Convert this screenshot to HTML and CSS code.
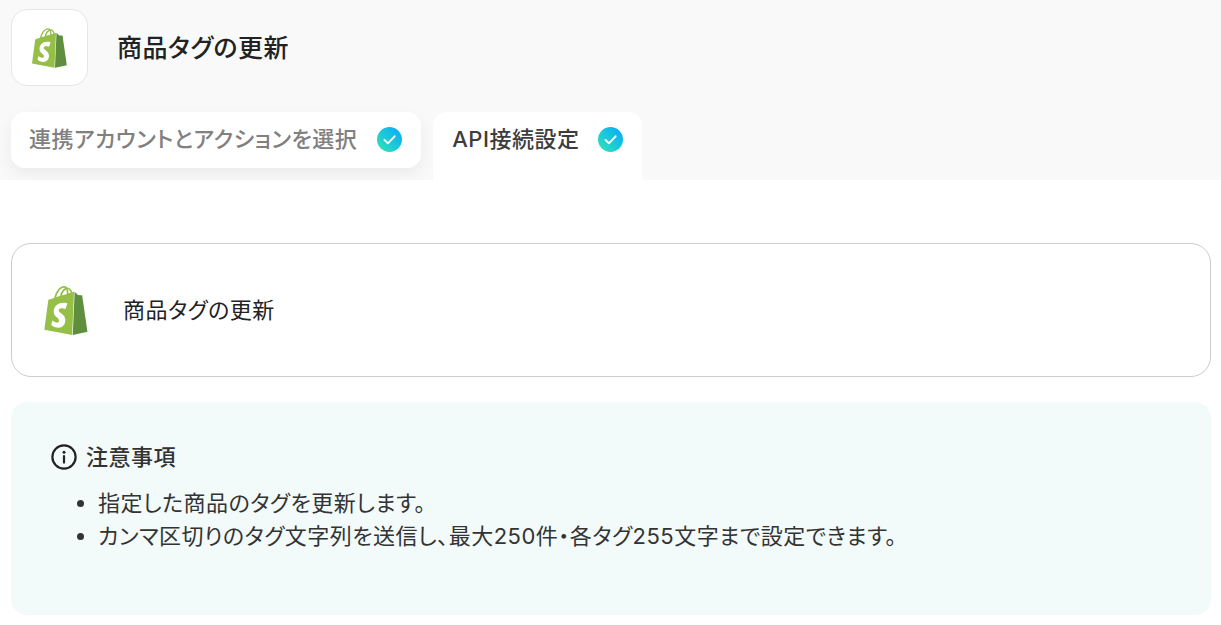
FILE: index.html
```html
<!DOCTYPE html>
<html lang="ja">
<head>
    <meta charset="UTF-8">
    <meta name="viewport" content="width=device-width, initial-scale=1.0">
    <title>商品タグの更新</title>
    <link rel="stylesheet" href="styles.css">
</head>
<body>
    <svg class="defs" width="0" height="0" aria-hidden="true">
        <defs>
            <linearGradient id="check-grad" x1="0" y1="1" x2="1" y2="0">
                <stop offset="0.1" stop-color="#2ee0bb"/>
                <stop offset="0.9" stop-color="#08aef8"/>
            </linearGradient>
            <symbol id="shopify" viewBox="1.4 0 21.2 24">
                <path fill="#95bf47" d="M11.71 11.305s-.81-.424-1.774-.424c-1.447 0-1.504.906-1.504 1.141 0 1.232 3.24 1.715 3.24 4.629 0 2.295-1.44 3.76-3.406 3.76-2.354 0-3.54-1.465-3.54-1.465l.646-2.086s1.245 1.066 2.28 1.066c.675 0 .975-.545.975-.932 0-1.619-2.654-1.694-2.654-4.359-.034-2.237 1.571-4.416 4.827-4.416 1.257 0 1.875.361 1.875.361l-.945 2.715-.02.01zM11.17.83c.136 0 .271.038.405.135-.984.465-2.064 1.639-2.508 3.992-.656.213-1.293.405-1.889.578C7.697 3.75 8.951.84 11.17.84V.83zm1.235 2.949v.135c-.754.232-1.583.484-2.394.736.466-1.777 1.333-2.645 2.085-2.971.193.501.309 1.176.309 2.1zm.539-2.234c.694.074 1.141.867 1.429 1.755-.349.114-.735.231-1.158.366v-.252c0-.752-.096-1.371-.271-1.871v.002zm2.992 1.289c-.02 0-.06.021-.078.021s-.289.075-.714.21c-.423-1.233-1.176-2.37-2.508-2.37h-.115C12.135.209 11.669 0 11.265 0 8.159 0 6.675 3.877 6.21 5.846c-1.194.365-2.063.636-2.16.674-.675.213-.694.232-.772.87-.075.462-1.83 14.063-1.83 14.063L15.009 24l.927-21.166z"/>
                <path fill="#5e8e3e" d="M15.337 23.979l7.216-1.561s-2.604-17.613-2.625-17.73c-.018-.116-.114-.192-.211-.192s-1.929-.136-1.929-.136-1.275-1.274-1.439-1.411c-.045-.037-.075-.057-.121-.074l-.914 21.104h.023z"/>
            </symbol>
            <symbol id="check" viewBox="0 0 25 25">
                <circle cx="12.5" cy="12.5" r="12.5" fill="url(#check-grad)"/>
                <path d="M7.4 12.9l3.5 3.4 6.7-7" fill="none" stroke="#fff" stroke-width="1.9" stroke-linecap="round" stroke-linejoin="round"/>
            </symbol>
        </defs>
    </svg>

    <header class="top">
        <div class="title-row">
            <div class="app-icon">
                <svg class="logo-small"><use href="#shopify"/></svg>
            </div>
            <h1>商品タグの更新</h1>
        </div>
        <nav class="tabs">
            <div class="tab tab-done">
                <span>連携アカウントとアクションを選択</span>
                <svg class="check"><use href="#check"/></svg>
            </div>
            <div class="tab tab-active">
                <span>API接続設定</span>
                <svg class="check"><use href="#check"/></svg>
            </div>
        </nav>
    </header>

    <main class="content">
        <div class="action-card">
            <svg class="logo-large"><use href="#shopify"/></svg>
            <span class="action-name">商品タグの更新</span>
        </div>

        <section class="notice">
            <h2>
                <svg class="info" viewBox="0 0 26 26">
                    <circle cx="13" cy="13" r="11.6" fill="none" stroke="#222" stroke-width="2.2"/>
                    <circle cx="13" cy="8.2" r="1.5" fill="#222"/>
                    <path d="M13 12v6.6" stroke="#222" stroke-width="2.2" stroke-linecap="round"/>
                </svg>
                注意事項
            </h2>
            <ul>
                <li>指定した商品のタグを更新します。</li>
                <li>カンマ区切りのタグ文字列を送信し、最大250件・各タグ255文字まで設定できます。</li>
            </ul>
        </section>
    </main>
</body>
</html>
```

FILE: styles.css
```css
* {
    margin: 0;
    padding: 0;
    box-sizing: border-box;
}

body {
    font-family: Inter, "Noto Sans CJK JP", "Noto Sans", sans-serif;
    font-feature-settings: "palt";
    letter-spacing: 0.5px;
    background-color: #fff;
    color: #222;
    overflow: hidden;
}

.defs {
    position: absolute;
}

/* Header */
.top {
    background-color: #f9f9f9;
    height: 180px;
    padding: 9px 10px 0 11px;
    overflow: hidden;
}

.title-row {
    display: flex;
    align-items: center;
    gap: 29px;
}

.app-icon {
    width: 77px;
    height: 77px;
    background-color: #fff;
    border: 1px solid #e6e6e6;
    border-radius: 16px;
    display: flex;
    align-items: center;
    justify-content: center;
}

.logo-small {
    width: 35px;
    height: 40px;
    margin-right: 1px;
}

h1 {
    font-size: 25px;
    font-weight: 500;
    color: #222;
    padding-bottom: 4px;
}

/* Tabs */
.tabs {
    display: flex;
    align-items: flex-start;
    gap: 12px;
    margin-top: 26px;
}

.tab {
    display: flex;
    align-items: center;
    background-color: #fff;
    font-size: 22px;
    font-weight: 500;
    line-height: 28px;
}

.tab span {
    padding-bottom: 2px;
}

.tab-done {
    gap: 20px;
    height: 56px;
    padding: 0 19px 0 18px;
    border-radius: 14px;
    color: #808080;
    box-shadow: 0 6px 16px rgba(0, 0, 0, 0.06);
}

.tab-active {
    gap: 19px;
    height: 68px;
    padding: 0 19px 12px;
    border-radius: 14px 14px 0 0;
    color: #3d3d3d;
}

.check {
    width: 25px;
    height: 25px;
    flex-shrink: 0;
    margin-bottom: 1px;
}

/* Content */
.content {
    padding: 63px 10px 0 11px;
    display: flex;
    flex-direction: column;
    gap: 25px;
}

.action-card {
    height: 134px;
    border: 1px solid #ccc;
    border-radius: 20px;
    display: flex;
    align-items: center;
    gap: 35px;
    padding-left: 32px;
    font-size: 22px;
    color: #222;
}

.action-name {
    padding-bottom: 4px;
}

.logo-large {
    width: 44px;
    height: 49px;
}

.notice {
    height: 213px;
    background-color: #f2fafa;
    border-radius: 16px;
    padding: 41px 40px 0;
}

.notice h2 {
    display: flex;
    align-items: center;
    gap: 9px;
    font-size: 22px;
    font-weight: 500;
    line-height: 28px;
    color: #333;
}

.info {
    width: 26px;
    height: 26px;
}

.notice ul {
    margin-top: 16px;
    padding-left: 47px;
    font-size: 22px;
    line-height: 33px;
    color: #333;
}
```
